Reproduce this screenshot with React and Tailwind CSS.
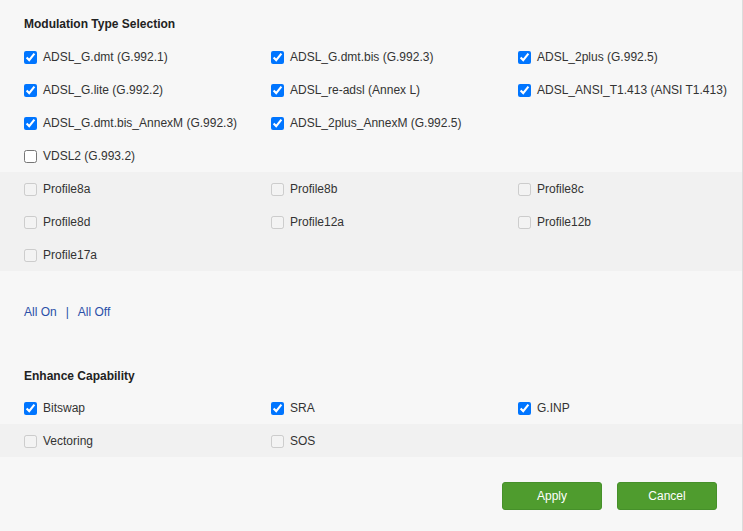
import React from "react";

function Cb({ label, checked, disabled }) {
  return (
    <label className="flex items-center h-[33px] pt-[1px]">
      <input
        type="checkbox"
        defaultChecked={checked}
        disabled={disabled}
        className="m-0 w-[13px] h-[13px] shrink-0"
      />
      <span className="ml-[6px] whitespace-nowrap text-[#333]">{label}</span>
    </label>
  );
}

function Row({ items, shaded }) {
  return (
    <div className={"grid grid-cols-[247px_247px_1fr] pl-[24px] " + (shaded ? "bg-[#f0f0f0]" : "")}>
      {items.map((it, i) => (
        <div key={i}>{it ? <Cb {...it} /> : null}</div>
      ))}
    </div>
  );
}

export default function App() {
  return (
    <div
      className="w-[743px] h-[531px] bg-[#f7f7f7] text-[12px] text-[#333] border-r border-[#dcdcdc] overflow-hidden"
      style={{ fontFamily: '"Liberation Sans", Arial, sans-serif' }}
    >
      <div className="h-[40px] pl-[24px] flex items-center pt-[8px]">
        <span className="font-bold text-[#222]">Modulation Type Selection</span>
      </div>
      <Row
        items={[
          { label: "ADSL_G.dmt (G.992.1)", checked: true },
          { label: "ADSL_G.dmt.bis (G.992.3)", checked: true },
          { label: "ADSL_2plus (G.992.5)", checked: true },
        ]}
      />
      <Row
        items={[
          { label: "ADSL_G.lite (G.992.2)", checked: true },
          { label: "ADSL_re-adsl (Annex L)", checked: true },
          { label: "ADSL_ANSI_T1.413 (ANSI T1.413)", checked: true },
        ]}
      />
      <Row
        items={[
          { label: "ADSL_G.dmt.bis_AnnexM (G.992.3)", checked: true },
          { label: "ADSL_2plus_AnnexM (G.992.5)", checked: true },
          null,
        ]}
      />
      <Row items={[{ label: "VDSL2 (G.993.2)", checked: false }, null, null]} />
      <div className="bg-[#f1f1f1]">
        <Row
          items={[
            { label: "Profile8a", disabled: true },
            { label: "Profile8b", disabled: true },
            { label: "Profile8c", disabled: true },
          ]}
        />
        <Row
          items={[
            { label: "Profile8d", disabled: true },
            { label: "Profile12a", disabled: true },
            { label: "Profile12b", disabled: true },
          ]}
        />
        <Row items={[{ label: "Profile17a", disabled: true }, null, null]} />
      </div>
      <div className="pl-[24px] pt-[33px] h-[90px] text-[#2a4fa8]">
        <div className="flex items-center h-[16px]">
          <span className="cursor-pointer">All On</span>
          <span className="mx-[9px]">|</span>
          <span className="cursor-pointer">All Off</span>
        </div>
      </div>
      <div className="h-[30px] pl-[24px] flex items-center">
        <span className="font-bold text-[#222]">Enhance Capability</span>
      </div>
      <Row
        items={[
          { label: "Bitswap", checked: true },
          { label: "SRA", checked: true },
          { label: "G.INP", checked: true },
        ]}
      />
      <div className="bg-[#f1f1f1]">
        <Row
          items={[
            { label: "Vectoring", disabled: true },
            { label: "SOS", disabled: true },
            null,
          ]}
        />
      </div>
      <div className="flex justify-end gap-[15px] pr-[25px] pt-[25px]">
        <button className="w-[100px] h-[28px] rounded-[3px] bg-[#4f9c2e] border border-[#46902a] text-white text-[12px]">
          Apply
        </button>
        <button className="w-[100px] h-[28px] rounded-[3px] bg-[#4f9c2e] border border-[#46902a] text-white text-[12px]">
          Cancel
        </button>
      </div>
    </div>
  );
}
